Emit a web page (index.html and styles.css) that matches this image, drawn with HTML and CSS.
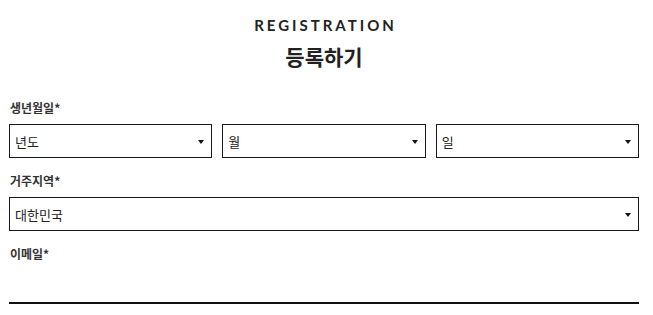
FILE: index.html
```html
<!DOCTYPE html>
<html lang="ko">
<head>
    <meta charset="UTF-8">
    <meta name="viewport" content="width=device-width, initial-scale=1.0">
    <title>등록하기</title>
    <link rel="stylesheet" href="styles.css">
</head>
<body>

<div class="container">
    <div class="page-head">
        <p class="eyebrow">REGISTRATION</p>
        <h2 class="title">등록하기</h2>
    </div>

    <form class="form">
        <div class="field">
            <label class="field-label" for="year">생년월일*</label>
            <div class="row-3">
                <div class="select-wrap">
                    <select id="year"><option>년도</option></select>
                </div>
                <div class="select-wrap">
                    <select id="month"><option>월</option></select>
                </div>
                <div class="select-wrap">
                    <select id="day"><option>일</option></select>
                </div>
            </div>
        </div>

        <div class="field">
            <label class="field-label" for="region">거주지역*</label>
            <div class="select-wrap">
                <select id="region"><option>대한민국</option></select>
            </div>
        </div>

        <div class="field">
            <label class="field-label" for="email">이메일*</label>
            <input type="email" id="email" class="line-input">
        </div>
    </form>
</div>

</body>
</html>
```

FILE: styles.css
```css
:root {
    --text-color: #222;
    --label-color: #333;
    --border-color: #1a1a1a;
}
body {
    margin: 0;
    background: #fff;
    color: var(--text-color);
    font-family: "Noto Sans CJK KR", "Noto Sans", sans-serif;
}
.container {
    margin: 0 14px 0 9px;
    padding-top: 15px;
}

.page-head { text-align: center; margin-bottom: 30px; }
.eyebrow {
    margin: 0;
    font-family: Lato, "DejaVu Sans", sans-serif;
    font-size: 15px;
    line-height: 20px;
    letter-spacing: 3px;
    font-weight: 700;
    color: #222;
    padding-left: 3px;
}
.title {
    margin: 7px 0 0;
    font-size: 21px;
    line-height: 28px;
    font-weight: 700;
    color: #222;
}

.field { margin-bottom: 15px; }
.field-label {
    display: block;
    font-size: 12px;
    line-height: 16px;
    font-weight: 700;
    color: var(--label-color);
    margin: 0 0 8px 1px;
}

.row-3 { display: grid; grid-template-columns: 1fr 1fr 1fr; gap: 10px; }

.select-wrap { position: relative; }
.select-wrap select {
    display: block;
    width: 100%;
    height: 34px;
    margin: 0;
    padding: 0 20px 0 5px;
    border: 1px solid var(--border-color);
    border-radius: 0;
    background: #fff;
    color: var(--text-color);
    font-family: inherit;
    font-size: 13px;
    -webkit-appearance: none;
    appearance: none;
}
/* little down arrow */
.select-wrap::after {
    content: "";
    position: absolute;
    right: 8px;
    top: 50%;
    margin-top: -1px;
    border-left: 3px solid transparent;
    border-right: 3px solid transparent;
    border-top: 4px solid #111;
    pointer-events: none;
}

.line-input {
    display: block;
    width: 100%;
    box-sizing: border-box;
    height: 34px;
    border: none;
    border-bottom: 2px solid #111;
    padding: 0 5px;
    font-size: 13px;
    outline: none;
}
```
